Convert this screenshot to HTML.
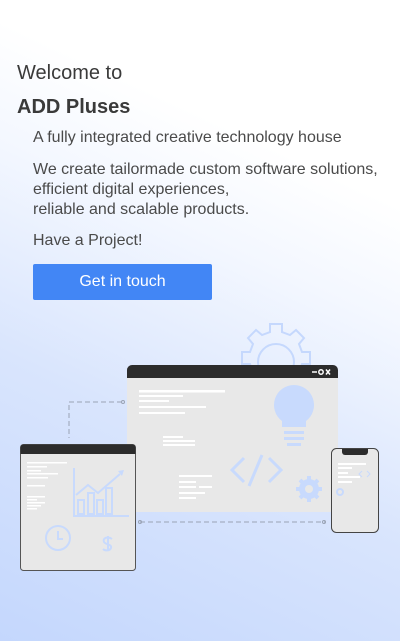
<!DOCTYPE html>
<html><head><meta charset="utf-8"><style>
html,body{margin:0;padding:0}
body{width:400px;height:641px;overflow:hidden;position:relative;font-family:"Liberation Sans",Roboto,sans-serif;color:#333;
background:linear-gradient(25deg,#c4d7fd 0%,#d9e5fd 35%,#f3f7ff 60%,#ffffff 75%);}
.t{position:absolute;white-space:nowrap}
</style></head><body>
<div class="t" style="left:17px;top:62px;font-size:20px;color:#3a3a3a">Welcome to</div>
<div class="t" style="left:17px;top:96px;font-size:20px;font-weight:bold;color:#3a3a3a">ADD Pluses</div>
<div class="t" style="left:33px;top:129px;font-size:16px;color:#4a4a4a">A fully integrated creative technology house</div>
<div class="t" style="left:33px;top:160px;font-size:16px;line-height:20px;color:#4a4a4a">We create tailormade custom software solutions,<br>efficient digital experiences,<br>reliable and scalable products.</div>
<div class="t" style="left:33px;top:232px;font-size:16px;color:#4a4a4a">Have a Project!</div>
<div style="position:absolute;left:33px;top:264px;width:179px;height:36px;background:#4286f5;border-radius:2px;color:#fff;font-size:16px;text-align:center;line-height:36px">Get in touch</div>
<svg style="position:absolute;left:0;top:0" width="400" height="641" viewBox="0 0 400 641">
<g fill="none" stroke="#c5d8fd" stroke-width="2">
<path d="M270 324h12v8l8 3 6-5 8 8-5 6 3 8h8v12h-8l-3 8 5 6-8 8-6-5-8 3v8h-12v-8l-8-3-6 5-8-8 5-6-3-8h-8v-12h8l3-8-5-6 8-8 6 5 8-3z"/>
<circle cx="276" cy="362" r="18"/>
</g>
<g fill="none" stroke="#9aa3b5" stroke-width="1" stroke-dasharray="5 3">
<path d="M122 402H69v36"/>
<path d="M140 522H325"/>
</g>
<circle cx="123" cy="402" r="1.5" fill="none" stroke="#9aa3b5"/>
<circle cx="140" cy="522" r="1.5" fill="none" stroke="#9aa3b5"/>
<circle cx="324" cy="522" r="1.5" fill="none" stroke="#9aa3b5"/>
<rect x="127" y="372" width="211" height="140" fill="#e8e8e8"/>
<path d="M127 378v-8a5 5 0 0 1 5-5h201a5 5 0 0 1 5 5v8z" fill="#2c2c2c"/>
<g stroke="#fff" stroke-width="1.5" fill="none">
<path d="M312 372h5"/><circle cx="321" cy="372" r="2.2"/><path d="M326 369.5l4 5M330 369.5l-4 5"/>
</g>
<g fill="#fff">
<rect x="139" y="390" width="86" height="2.5"/><rect x="139" y="395" width="44" height="2"/><rect x="139" y="400" width="30" height="2"/><rect x="139" y="406" width="67" height="2"/><rect x="139" y="412" width="46" height="2"/>
<rect x="163" y="436" width="20" height="2"/><rect x="163" y="440" width="32" height="2"/><rect x="163" y="444" width="32" height="2"/>
<rect x="179" y="475" width="33" height="2"/><rect x="179" y="481" width="17" height="2"/><rect x="199" y="486" width="13" height="2"/><rect x="179" y="486" width="17" height="2"/><rect x="179" y="492" width="26" height="2"/><rect x="179" y="497" width="17" height="2"/>
</g>
<g fill="#c8dafd">
<path d="M294 385a20 20 0 0 1 12 36v6h-24v-6a20 20 0 0 1 12-36z"/>
<rect x="284" y="431" width="20" height="3"/><rect x="284" y="437" width="20" height="3"/><rect x="287" y="443" width="14" height="3"/>
</g>
<g fill="none" stroke="#c8dafd" stroke-width="3">
<path d="M244 458l-12 12 12 12M269 458l12 12-12 12M262 455l-13 31"/>
</g>
<g fill="#c8dafd"><circle cx="309" cy="489" r="10"/>
<g stroke="#c8dafd" stroke-width="4"><path d="M309 476v26M296 489h26M300 480l18 18M318 480l-18 18"/></g></g>
<circle cx="309" cy="489" r="4" fill="#e8e8e8"/>
<rect x="20.5" y="444.5" width="115" height="126" rx="3" fill="#e8e8e8" stroke="#555"/>
<path d="M20.5 454v-6.5a3 3 0 0 1 3-3h109a3 3 0 0 1 3 3v6.5z" fill="#2c2c2c"/>
<g fill="#fff">
<rect x="27" y="462" width="40" height="1.5"/><rect x="27" y="466" width="20" height="1.5"/><rect x="27" y="470" width="14" height="1.5"/><rect x="27" y="473" width="31" height="1.5"/><rect x="27" y="477" width="21" height="1.5"/><rect x="27" y="485" width="18" height="1.5"/><rect x="27" y="496" width="18" height="1.5"/><rect x="27" y="499" width="10" height="1.5"/><rect x="27" y="502" width="18" height="1.5"/><rect x="27" y="505" width="14" height="1.5"/><rect x="27" y="508" width="10" height="1.5"/>
</g>
<g fill="none" stroke="#c8dafd" stroke-width="2">
<path d="M74 468v48h55"/>
<rect x="78" y="500" width="6" height="14"/><rect x="88" y="493" width="6" height="21"/><rect x="97" y="500" width="6" height="14"/><rect x="106" y="488" width="6" height="26"/>
<path d="M76 495l12-10 10 8 22-19"/>
<circle cx="58" cy="538" r="12"/><path d="M58 531v8h5"/>
<path d="M112 539c-4-3-10-1-8 3 2 3 8 2 7 6-1 3-6 3-8 1M108 536v15"/>
</g>
<path d="M118 471l6-1-2 6z" fill="#c8dafd"/>
<rect x="331.5" y="448.5" width="47" height="84" rx="5" fill="#e8e8e8" stroke="#444"/>
<path d="M342 449h26v3a3 3 0 0 1-3 3h-20a3 3 0 0 1-3-3z" fill="#2c2c2c"/>
<g fill="#fff"><rect x="338" y="463" width="28" height="2"/><rect x="338" y="467" width="14" height="2"/><rect x="338" y="472" width="10" height="2"/><rect x="338" y="476" width="22" height="2"/><rect x="338" y="481" width="14" height="2"/></g>
<path d="M362 471l-3 3 3 3M367 471l3 3-3 3" fill="none" stroke="#c8dafd"/>
<circle cx="340" cy="492" r="3" fill="none" stroke="#c8dafd" stroke-width="2"/>
</svg>
</body></html>
